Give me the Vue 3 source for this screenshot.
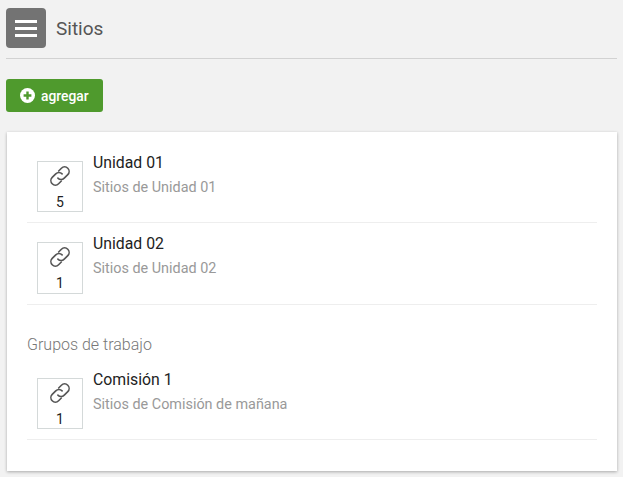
<script setup>
const units = [
  { id: 1, name: 'Unidad 01', desc: 'Sitios de Unidad 01', count: 5 },
  { id: 2, name: 'Unidad 02', desc: 'Sitios de Unidad 02', count: 1 },
]
const groups = [
  { id: 3, name: 'Comisión 1', desc: 'Sitios de Comisión de mañana', count: 1 },
]
</script>

<template>
  <div class="page">
    <header class="top">
      <button class="menu">
        <span></span><span></span><span></span>
      </button>
      <h1>Sitios</h1>
    </header>
    <button class="add">
      <svg class="plus" width="15" height="15" viewBox="0 0 15 15">
        <circle cx="7.5" cy="7.5" r="7.5" fill="#fff" />
        <path d="M7.5 3.6v7.8M3.6 7.5h7.8" stroke="#4f9a2d" stroke-width="2.4" />
      </svg>
      agregar
    </button>
    <section class="card">
      <div v-for="item in units" :key="item.id" class="row">
        <div class="box">
          <svg width="24" height="24" viewBox="0 0 24 24" fill="none" stroke="#555" stroke-width="1.6" stroke-linecap="round">
            <g transform="rotate(-45 12 12)">
              <path d="M14.6 7.5H18.5a4.5 4.5 0 0 1 0 9H13.5a4.5 4.5 0 0 1-4.5-4.5" />
              <path d="M9.4 16.5H5.5a4.5 4.5 0 0 1 0-9H10.5a4.5 4.5 0 0 1 4.5 4.5" />
            </g>
          </svg>
          <span>{{ item.count }}</span>
        </div>
        <div class="info">
          <div class="name">{{ item.name }}</div>
          <div class="desc">{{ item.desc }}</div>
        </div>
      </div>
      <h2>Grupos de trabajo</h2>
      <div v-for="item in groups" :key="item.id" class="row">
        <div class="box">
          <svg width="24" height="24" viewBox="0 0 24 24" fill="none" stroke="#555" stroke-width="1.6" stroke-linecap="round">
            <g transform="rotate(-45 12 12)">
              <path d="M14.6 7.5H18.5a4.5 4.5 0 0 1 0 9H13.5a4.5 4.5 0 0 1-4.5-4.5" />
              <path d="M9.4 16.5H5.5a4.5 4.5 0 0 1 0-9H10.5a4.5 4.5 0 0 1 4.5 4.5" />
            </g>
          </svg>
          <span>{{ item.count }}</span>
        </div>
        <div class="info">
          <div class="name">{{ item.name }}</div>
          <div class="desc">{{ item.desc }}</div>
        </div>
      </div>
    </section>
  </div>
</template>

<style>
html, body {
  margin: 0;
  background: #f2f2f2;
}
</style>

<style scoped>
.page {
  height: 477px;
  box-sizing: border-box;
  padding: 8px 6px 0;
  font-family: Roboto, "Liberation Sans", sans-serif;
  overflow: hidden;
}
.top {
  display: flex;
  align-items: flex-start;
  height: 50px;
  border-bottom: 1px solid #d2d2d2;
}
.top h1 {
  margin: 0 0 0 10px;
  font-size: 19px;
  line-height: 42px;
  font-weight: 400;
  color: #555;
}
.menu {
  width: 40px;
  height: 40px;
  padding: 0;
  border: 0;
  border-radius: 4px;
  background: #737373;
  display: flex;
  flex-direction: column;
  align-items: center;
  justify-content: center;
  gap: 4px;
}
.menu span {
  display: block;
  width: 22px;
  height: 3px;
  background: #fff;
}
.add {
  display: flex;
  align-items: center;
  gap: 6px;
  width: 97px;
  height: 33px;
  margin-top: 20px;
  padding: 0 0 0 14px;
  border: 0;
  border-radius: 3px;
  background: #4f9a2d;
  color: #fff;
  font: 500 13.8px Roboto, "Liberation Sans", sans-serif;
}
.card {
  width: 610px;
  height: 339px;
  box-sizing: border-box;
  margin: 20px 0 0 1px;
  padding: 9px 20px 0 20px;
  background: #fff;
  box-shadow: 0 1px 3px rgba(0, 0, 0, 0.3);
}
.row {
  display: flex;
  height: 81.8px;
  box-sizing: border-box;
  padding: 19.6px 0 0 10px;
  border-bottom: 1px solid #eee;
}
.box {
  width: 46px;
  height: 51.4px;
  box-sizing: border-box;
  border: 1px solid #d4d9d9;
  display: flex;
  flex-direction: column;
  align-items: center;
  padding-top: 2px;
  font-size: 14px;
  color: #222;
}
.box span {
  margin-top: 6px;
}
.info {
  margin-left: 10px;
  margin-top: -9px;
}
.name {
  font-size: 15.8px;
  line-height: 22px;
  color: #222;
}
.desc {
  margin-top: 5px;
  font-size: 14.4px;
  line-height: 18px;
  color: #999;
}
h2 {
  margin: 30px 0 3.6px;
  font-size: 16px;
  font-weight: 300;
  line-height: 20px;
  color: #777;
}
</style>
